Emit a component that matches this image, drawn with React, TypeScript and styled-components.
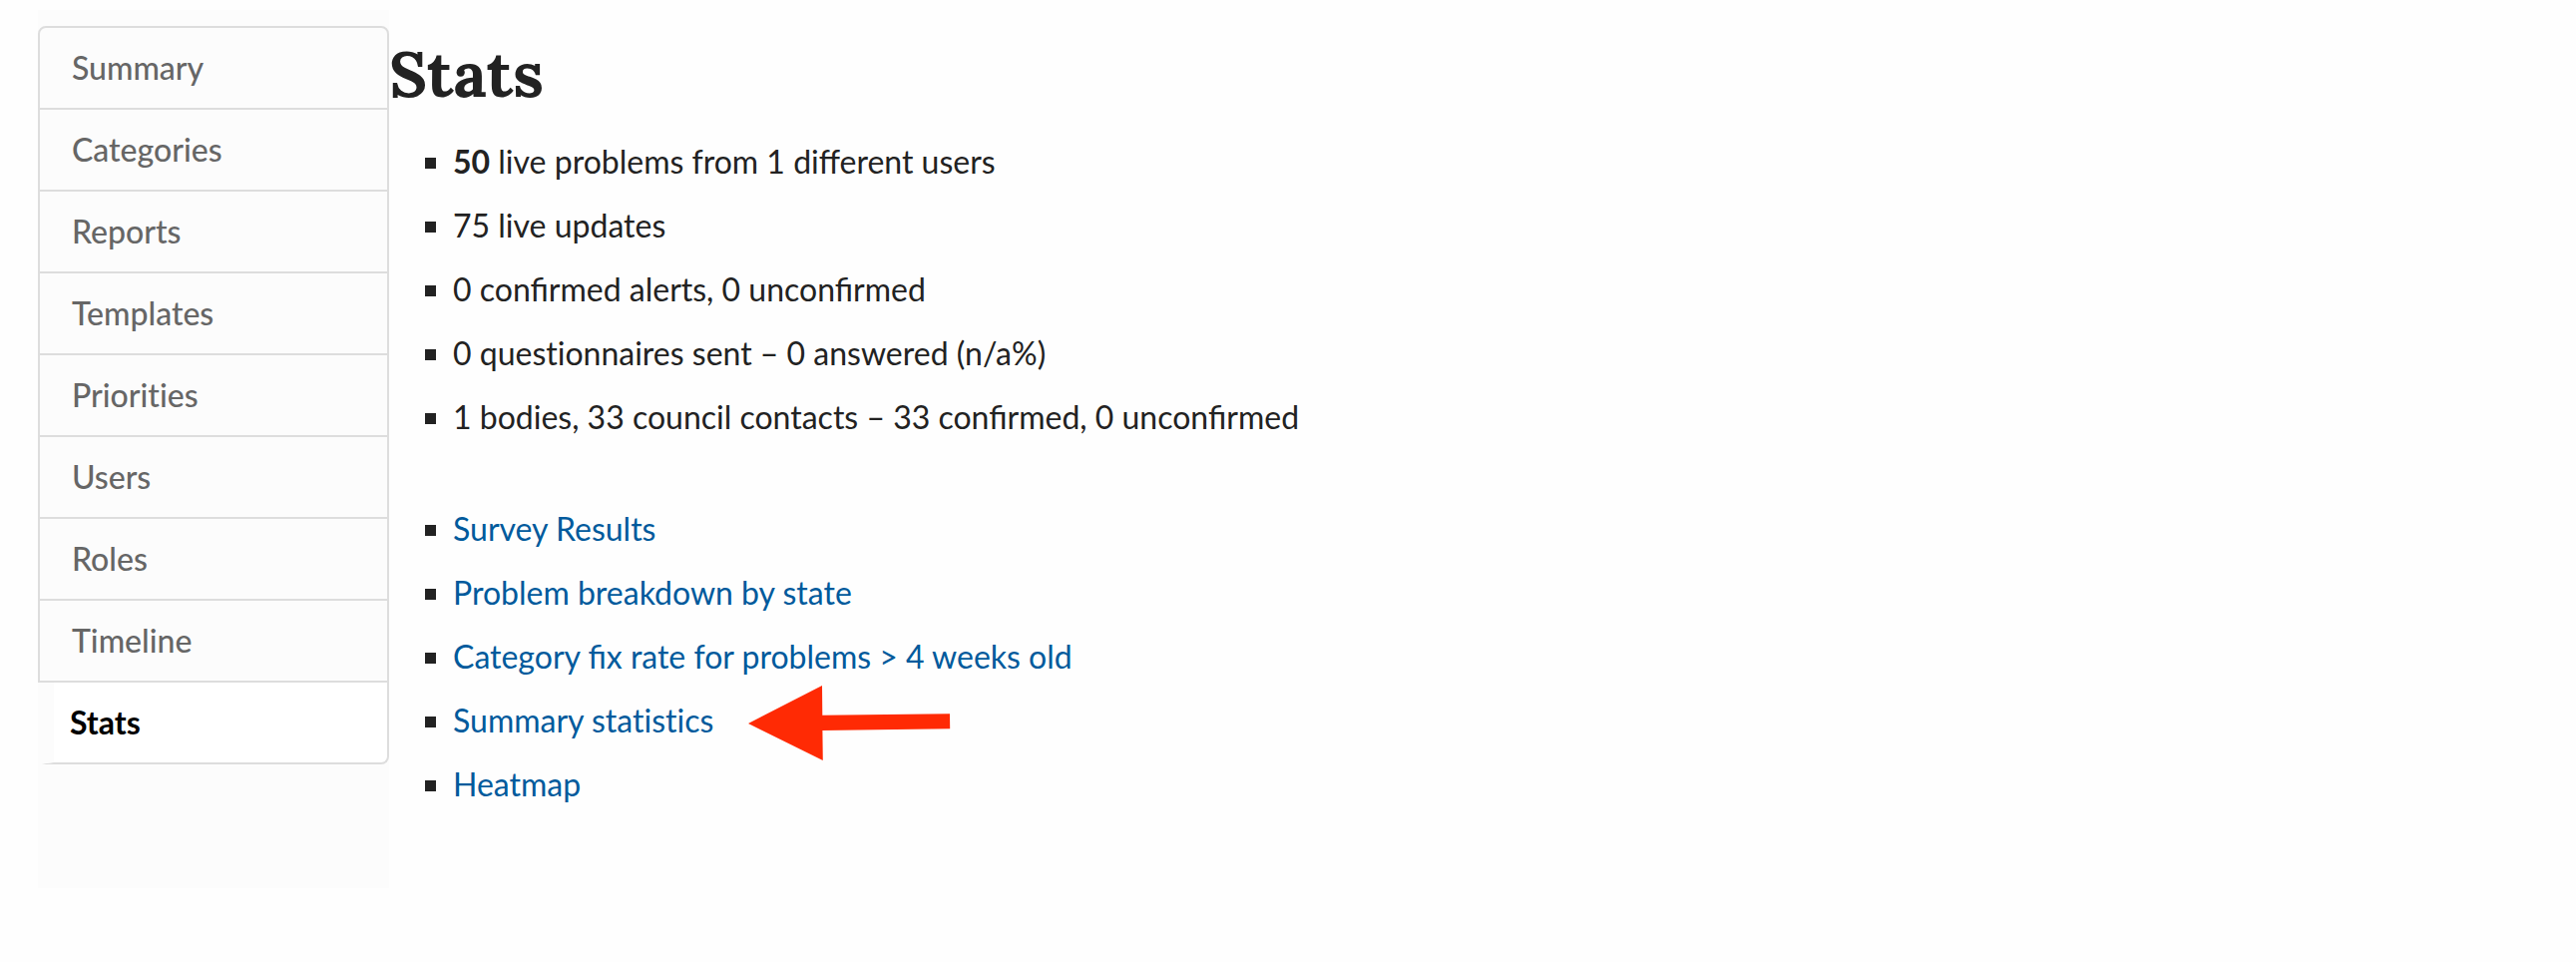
import React from "react";
import styled, { createGlobalStyle, css } from "styled-components";

const GlobalStyle = createGlobalStyle`
  body {
    margin: 0;
    background: #fefefe;
    color: #222222;
    font-family: Lato, "Liberation Sans", sans-serif;
    font-size: 32px;
    line-height: 48px;
  }
`;

const Page = styled.div`
  display: flex;
  padding: 10px 38px 74px;
`;

const Sidebar = styled.nav`
  box-sizing: border-box;
  flex: 0 0 352px;
  padding: 16px 0 124px;
  background: #fcfcfc;
  font-variant-ligatures: none;
  font-weight: 500;
`;

const NavList = styled.ul`
  margin: 0;
  padding: 0;
  list-style: none;
`;

const NavItem = styled.li`
  &:first-child a {
    border-top: 2px solid #dddddd;
    border-radius: 8px 8px 0 0;
  }

  &:last-child a {
    border-radius: 0 0 8px 8px;
  }
`;

const NavLink = styled.a<{ $active?: boolean }>`
  display: block;
  padding: 16px 32px;
  border: 2px solid #dddddd;
  border-top: 0;
  color: #666666;
  text-decoration: none;

  ${({ $active }) =>
    $active &&
    css`
      padding-left: 16px;
      border-left: 16px solid #fcfcfc;
      background: #ffffff;
      color: #000000;
      font-weight: bold;
    `}
`;

const Content = styled.main`
  flex: 1;
  min-width: 0;
`;

const Title = styled.h1`
  margin: 0;
  padding: 28px 0;
  font-family: Lora, "Liberation Serif", serif;
  font-size: 64px;
  font-weight: bold;
  line-height: 72px;
`;

const BulletList = styled.ul`
  margin: 0 0 64px;
  padding: 0 0 0 64px;
  list-style: square;
`;

const BulletItem = styled.li<{ $noLigatures?: boolean }>`
  margin-bottom: 16px;
  font-variant-ligatures: ${({ $noLigatures }) => ($noLigatures ? "none" : "normal")};
`;

const PageLink = styled.a`
  color: #005a9c;
  text-decoration: none;
`;

const Annotated = styled.span`
  position: relative;
  display: inline-block;
`;

const Arrow = styled.svg`
  position: absolute;
  top: -11px;
  left: 100%;
  margin-left: 35px;
`;

const sections = [
  "Summary",
  "Categories",
  "Reports",
  "Templates",
  "Priorities",
  "Users",
  "Roles",
  "Timeline",
  "Stats",
];

const reports = [
  { label: "Survey Results" },
  { label: "Problem breakdown by state" },
  { label: "Category fix rate for problems > 4 weeks old" },
  { label: "Summary statistics", highlighted: true },
  { label: "Heatmap" },
];

const HighlightArrow = () => (
  <Arrow width="203" height="76" viewBox="0 0 203 76" aria-hidden="true">
    <path d="M0 38 L74 0 L74.3 29.7 L202 28.3 L202.2 43.3 L74.4 44.9 L74.8 75 Z" fill="#ff2a04" />
  </Arrow>
);

export default function App() {
  return (
    <>
      <GlobalStyle />
      <Page>
        <Sidebar aria-label="Admin">
          <NavList>
            {sections.map((name) => (
              <NavItem key={name}>
                <NavLink
                  href={`#${name.toLowerCase()}`}
                  $active={name === "Stats"}
                  aria-current={name === "Stats" ? "page" : undefined}
                >
                  {name}
                </NavLink>
              </NavItem>
            ))}
          </NavList>
        </Sidebar>
        <Content>
          <Title>Stats</Title>
          <BulletList>
            <BulletItem>
              <strong>50</strong> live problems from 1 different users
            </BulletItem>
            <BulletItem>75 live updates</BulletItem>
            <BulletItem>0 confirmed alerts, 0 unconfirmed</BulletItem>
            <BulletItem $noLigatures>0 questionnaires sent – 0 answered (n/a%)</BulletItem>
            <BulletItem>1 bodies, 33 council contacts – 33 confirmed, 0 unconfirmed</BulletItem>
          </BulletList>
          <BulletList>
            {reports.map(({ label, highlighted }) => (
              <BulletItem key={label} $noLigatures={highlighted}>
                {highlighted ? (
                  <Annotated>
                    <PageLink href="#report">{label}</PageLink>
                    <HighlightArrow />
                  </Annotated>
                ) : (
                  <PageLink href="#report">{label}</PageLink>
                )}
              </BulletItem>
            ))}
          </BulletList>
        </Content>
      </Page>
    </>
  );
}
